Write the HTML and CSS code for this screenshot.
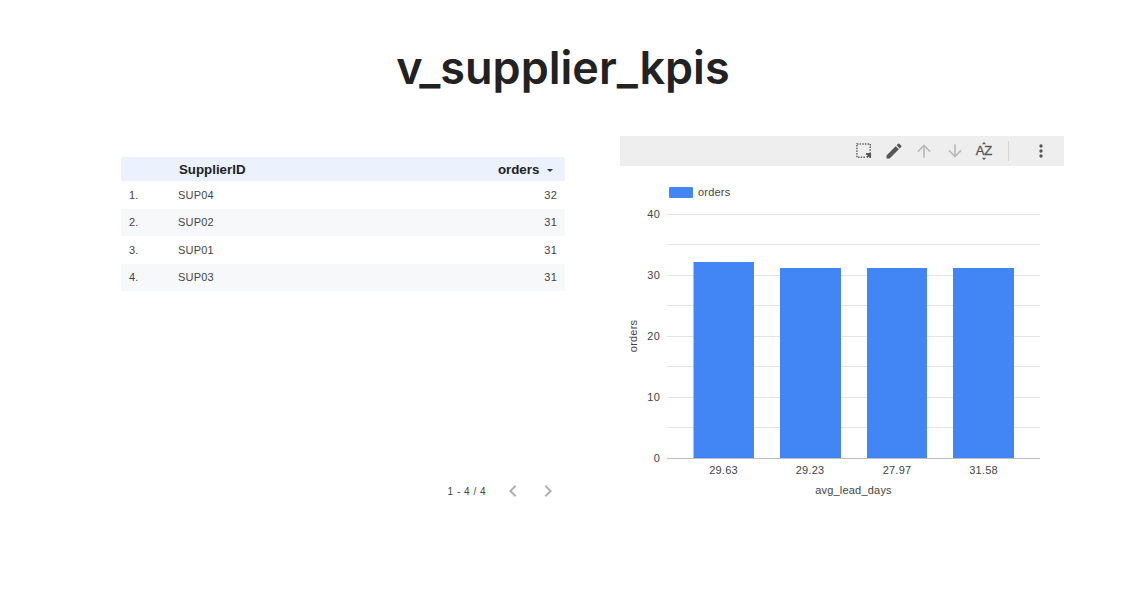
FILE: index.html
```html
<!DOCTYPE html>
<html lang="en">
<head>
    <meta charset="UTF-8">
    <title>v_supplier_kpis</title>
    <link rel="stylesheet" href="styles.css">
</head>
<body>
    <h1 class="page-title">v_supplier_kpis</h1>

    <div class="report">
        <section class="table-panel">
            <div class="table-rows">
                <div class="row head">
                    <span class="cell-num"></span>
                    <span class="cell-name">SupplierID</span>
                    <span class="cell-val">orders <i class="sort-caret"></i></span>
                </div>
                <div class="row">
                    <span class="cell-num">1.</span>
                    <span class="cell-name">SUP04</span>
                    <span class="cell-val">32</span>
                </div>
                <div class="row alt">
                    <span class="cell-num">2.</span>
                    <span class="cell-name">SUP02</span>
                    <span class="cell-val">31</span>
                </div>
                <div class="row">
                    <span class="cell-num">3.</span>
                    <span class="cell-name">SUP01</span>
                    <span class="cell-val">31</span>
                </div>
                <div class="row alt">
                    <span class="cell-num">4.</span>
                    <span class="cell-name">SUP03</span>
                    <span class="cell-val">31</span>
                </div>
            </div>
            <div class="pager">
                <span class="pager-text">1 - 4 / 4</span>
                <svg class="pager-icon" viewBox="0 0 24 24"><path d="M15.4 7.4 14 6l-6 6 6 6 1.4-1.4L10.800 12z"/></svg>
                <svg class="pager-icon" viewBox="0 0 24 24"><path d="M10 6 8.600 7.400 13.200 12l-4.600 4.600L10 18l6-6z"/></svg>
            </div>
        </section>

        <section class="chart-panel">
            <div class="toolbar">
                <svg class="tool" viewBox="0 0 24 24">
                    <rect x="3.500" y="3.500" width="16" height="16" fill="none" stroke="#666" stroke-width="1.800" stroke-dasharray="1.800 1.400"/>
                    <path d="M14 14h7v7h-7z" fill="#eee"/>
                    <path d="M14.500 14.500h6v6h-2.200v-2.300l-2.300 2.300-1.500-1.500 2.300-2.300h-2.300z" fill="#555"/>
                </svg>
                <svg class="tool" viewBox="0 0 24 24"><path fill="#555" d="M3 17.250V21h3.750L17.810 9.940l-3.750-3.750L3 17.250zM20.710 7.040a1 1 0 0 0 0-1.410l-2.340-2.340a1 1 0 0 0-1.410 0l-1.830 1.830 3.750 3.750 1.830-1.830z"/></svg>
                <svg class="tool" viewBox="0 0 24 24"><path fill="#bbb" d="M4 12l1.410 1.410L11 7.830V20h2V7.830l5.580 5.590L20 12l-8-8z"/></svg>
                <svg class="tool tool-down" viewBox="0 0 24 24"><path fill="#bbb" d="M20 12l-1.410-1.410L13 16.170V4h-2v12.170l-5.580-5.590L4 12l8 8z"/></svg>
                <span class="tool tool-sort">
                    <svg class="sort-marks" viewBox="0 0 24 24"><path fill="#666" d="M12 1l2.500 3h-5zM12 23l-2.500-3h5z"/></svg>
                    <span class="az">AZ</span>
                </span>
                <span class="tool-sep"></span>
                <svg class="tool" viewBox="0 0 24 24"><path fill="#555" d="M12 8a2 2 0 1 0 0-4 2 2 0 0 0 0 4zm0 2a2 2 0 1 0 0 4 2 2 0 0 0 0-4zm0 6a2 2 0 1 0 0 4 2 2 0 0 0 0-4z"/></svg>
            </div>
            <svg class="chart" viewBox="0 0 444 346">
                <rect x="49" y="21" width="24" height="11" rx="1" fill="#4285f4"/>
                <text x="78" y="30" class="lbl">orders</text>

                <g stroke="#e4e4e4" stroke-width="1">
                    <path d="M47 48.500h373"/>
                    <path d="M47 78.500h373"/>
                    <path d="M47 109.500h373"/>
                    <path d="M47 139.500h373"/>
                    <path d="M47 170.500h373"/>
                    <path d="M47 200.500h373"/>
                    <path d="M47 231.500h373"/>
                    <path d="M47 261.500h373"/>
                </g>

                <g fill="#4285f4">
                    <rect x="73.500" y="96" width="60.500" height="196"/>
                    <rect x="160" y="102" width="61" height="190"/>
                    <rect x="247" y="102" width="60" height="190"/>
                    <rect x="333" y="102" width="61" height="190"/>
                </g>
                <path d="M47 292.500h373" stroke="#bdbdbd" stroke-width="1"/>

                <g class="lbl" text-anchor="end">
                    <text x="40" y="52">40</text>
                    <text x="40" y="113">30</text>
                    <text x="40" y="174">20</text>
                    <text x="40" y="235">10</text>
                    <text x="40" y="296">0</text>
                </g>
                <g class="lbl" text-anchor="middle">
                    <text x="103.500" y="308">29.63</text>
                    <text x="190" y="308">29.23</text>
                    <text x="277" y="308">27.97</text>
                    <text x="363.500" y="308">31.58</text>
                    <text x="233.500" y="328">avg_lead_days</text>
                </g>
                <text class="lbl" text-anchor="middle" transform="translate(17 170) rotate(-90)">orders</text>
            </svg>
        </section>
    </div>
</body>
</html>
```

FILE: styles.css
```css
body {
    margin: 0;
    background: #ffffff;
    color: #333;
    font-family: 'Liberation Sans', Arial, sans-serif;
}
.page-title {
    margin: 0;
    padding-top: 38px;
    height: 62px;
    text-align: center;
    font-family: 'Inter', sans-serif;
    font-size: 45px;
    font-weight: 600;
    line-height: 60px;
    color: #222;
}
.report {
    display: flex;
    gap: 55px;
    padding: 36px 0 0 121px;
}
.table-panel {
    width: 444px;
    padding-top: 21px;
    display: flex;
    flex-direction: column;
}
.table-rows {
    height: 319px;
}
.row {
    display: flex;
    align-items: center;
    height: 27.500px;
    padding: 0 8px;
    font-size: 11px;
    letter-spacing: 0.2px;
    color: #444;
}
.row.alt {
    background: #f7f8fa;
}
.row.head {
    height: 24px;
    background: #ebf1fd;
    border-radius: 2px 2px 0 0;
    font-size: 13.300px;
    letter-spacing: 0;
    font-weight: bold;
    color: #222;
}
.cell-num {
    width: 49px;
}
.cell-name {
    flex: 1;
}
.head .cell-name {
    padding-left: 1px;
}
.cell-val {
    text-align: right;
}
.sort-caret {
    display: inline-block;
    margin: 0 4px 2px 4px;
    border-left: 3px solid transparent;
    border-right: 3px solid transparent;
    border-top: 3px solid #333;
}
.pager {
    display: flex;
    align-items: center;
    justify-content: flex-end;
    padding-right: 5px;
    height: 30px;
}
.pager-text {
    font-size: 10px;
    letter-spacing: 0.5px;
    color: #444;
    margin-right: 15px;
}
.pager-icon {
    width: 24px;
    height: 24px;
    fill: #b0b0b0;
    margin-left: 11px;
}
.pager-icon:first-of-type {
    margin-left: 0;
}
.chart-panel {
    width: 444px;
}
.toolbar {
    display: flex;
    align-items: center;
    justify-content: flex-end;
    gap: 10px;
    height: 30px;
    padding-right: 13px;
    background: #eeeeee;
}
.tool {
    width: 20px;
    height: 20px;
    display: block;
}
.tool-down {
    margin: 0 -1px 0 1px;
}
.tool-sort {
    position: relative;
    text-align: center;
}
.sort-marks {
    position: absolute;
    left: 0;
    top: 0;
    width: 20px;
    height: 20px;
}
.az {
    font-size: 13px;
    line-height: 20px;
    color: #555;
    -webkit-text-stroke: 0.3px #555;
}
.tool-sep {
    width: 1px;
    height: 20px;
    background: #d4d4d4;
    margin: 0 12px 0 4px;
}
.chart {
    display: block;
    width: 444px;
    height: 346px;
}
.lbl, .lbl text {
    font-family: 'Liberation Sans', Arial, sans-serif;
    font-size: 11px;
    letter-spacing: 0.2px;
    fill: #444;
}
```
